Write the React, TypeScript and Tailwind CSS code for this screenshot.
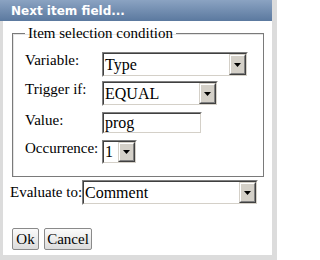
import React from "react";

type SelectProps = {
  value: string;
  width: string;
  height?: string;
};

const serif = "font-['Times_New_Roman','Liberation_Serif',serif]";

const Arrow = () => (
  <svg width="7" height="4" viewBox="0 0 7 4" className="block">
    <path d="M0 0h7L3.5 4z" fill="#000" />
  </svg>
);

const ClassicSelect = ({ value, width, height = "h-[25px]" }: SelectProps) => {
  return (
    <div
      className={`${width} ${height} flex border border-t-[#808080] border-l-[#808080] border-b-white border-r-white`}
    >
      <div className="flex flex-1 min-w-0 border border-t-[#404040] border-l-[#404040] border-b-[#d4d0c8] border-r-[#d4d0c8] bg-white">
        <span className={`flex-1 pl-[1px] text-[16px] leading-[18px] text-black self-center whitespace-nowrap overflow-hidden ${serif}`}>
          {value}
        </span>
        <div className="w-[17px] flex border border-t-[#d4d0c8] border-l-[#d4d0c8] border-b-[#404040] border-r-[#404040]">
          <div className="flex flex-1 items-center justify-center bg-[#d4d0c8] border border-t-white border-l-white border-b-[#808080] border-r-[#808080]">
            <Arrow />
          </div>
        </div>
      </div>
    </div>
  );
};

const ClassicInput = ({ value }: { value: string }) => (
  <div className="w-[100px] h-[22px] flex border border-t-[#808080] border-l-[#808080] border-b-white border-r-white">
    <div className="flex flex-1 border border-t-[#404040] border-l-[#404040] border-b-[#d4d0c8] border-r-[#d4d0c8] bg-white">
      <span className={`pl-[1px] text-[16px] leading-[18px] self-center text-black ${serif}`}>{value}</span>
    </div>
  </div>
);

const Button = ({ label, width }: { label: string; width: string }) => (
  <button
    className={`${width} h-[22px] flex items-center justify-center rounded-[2px] border border-[#8a8a8a] bg-gradient-to-b from-[#fbfbfb] to-[#dcdcdc] text-[15px] leading-[17px] text-black ${serif}`}
  >
    {label}
  </button>
);

const App = () => {
  const rows = [
    { label: "Variable:", node: <ClassicSelect value="Type" width="w-[146px]" />, gap: "" },
    { label: "Trigger if:", node: <ClassicSelect value="EQUAL" width="w-[116px]" />, gap: "mt-[4px]" },
    { label: "Value:", node: <ClassicInput value="prog" />, gap: "mt-[6px]" },
    { label: "Occurrence:", node: <ClassicSelect value="1" width="w-[35px]" height="h-[24px]" />, gap: "mt-[6px]" },
  ];

  return (
    <div className="w-[277px] h-[260px] bg-[#dcdcdc] overflow-hidden">
      <div className="w-[272px] h-[255px] flex flex-col">
        <div className="h-[21px] bg-gradient-to-b from-[#8ba3c2] to-[#5b799f] flex items-center pl-[11px]">
          <span className="font-['DejaVu_Sans',sans-serif] font-bold text-[12px] text-white leading-none">
            Next item field...
          </span>
        </div>
        <div className="flex-1 ml-[3px] bg-white flex flex-col">
          <fieldset className="mt-[4px] ml-[9px] w-[252px] border border-[#7a7a7a] shadow-[inset_1px_1px_0_#e4e4e4] pl-[12px] pb-[12px]">
            <legend className={`px-[3px] text-[15px] leading-[17px] text-black ${serif}`}>
              Item selection condition
            </legend>
            <div className="pt-[10px] flex flex-col">
              {rows.map((row) => (
                <div key={row.label} className={`flex items-start ${row.gap}`}>
                  <span className={`w-[77px] text-[15px] leading-[17px] text-black whitespace-nowrap ${serif}`}>
                    {row.label}
                  </span>
                  {row.node}
                </div>
              ))}
            </div>
          </fieldset>
          <div className="mt-[3px] ml-[7px] flex items-center">
            <span className={`w-[72px] text-[15px] leading-[17px] text-black whitespace-nowrap ${serif}`}>
              Evaluate to:
            </span>
            <ClassicSelect value="Comment" width="w-[176px]" />
          </div>
          <div className="mt-[23px] ml-[9px] flex gap-[5px]">
            <Button label="Ok" width="w-[27px]" />
            <Button label="Cancel" width="w-[48px]" />
          </div>
        </div>
      </div>
    </div>
  );
};

export default App;
